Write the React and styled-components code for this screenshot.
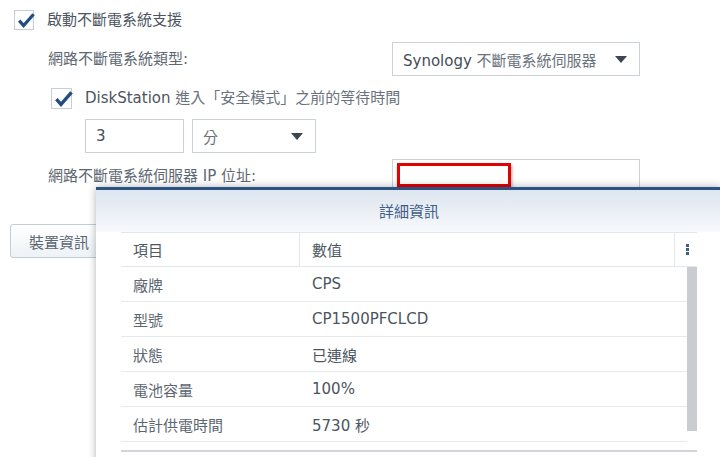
import React from "react";
import styled, { createGlobalStyle } from "styled-components";

const FONT = `"DejaVu Sans", "Noto Sans CJK TC", sans-serif`;

const Global = createGlobalStyle`
  html, body { margin: 0; padding: 0; background: #fff; }
  body {
    width: 720px; height: 457px; overflow: hidden;
    font-family: ${FONT};
    font-size: 15px; color: #4b5561;
  }
  * { box-sizing: border-box; }
`;

const Page = styled.div`
  position: relative;
  width: 720px;
  height: 457px;
  overflow: hidden;
  padding-top: 10px;
`;

const Row = styled.div`
  display: flex;
  align-items: center;
  margin-left: ${(p) => p.$indent || 0}px;
  margin-top: ${(p) => p.$top || 0}px;
  gap: ${(p) => p.$gap || 0}px;
  height: ${(p) => p.$h || 34}px;
`;

const FieldRow = styled.div`
  display: grid;
  grid-template-columns: 344px 248px;
  align-items: center;
  margin-left: 48px;
  margin-top: ${(p) => p.$top || 0}px;
  height: 34px;
`;

const Label = styled.span`
  font-size: 15px;
  color: ${(p) => (p.$dim ? "#5d6772" : "#4b5561")};
  white-space: nowrap;
  line-height: 1;
`;

const Box = styled.span`
  width: ${(p) => p.$s}px;
  height: ${(p) => p.$s}px;
  border: 1px solid #c6ced7;
  background: #fff;
  position: relative;
  flex: none;
  svg { position: absolute; left: 1px; top: 0px; overflow: visible; }
`;

const Checkbox = ({ size = 20 }) => (
  <Box $s={size}>
    <svg width={size} height={size} viewBox="0 0 20 20">
      <path d="M3.2 9.6 L7.6 14.6 L17.6 3.2" fill="none" stroke="#1f4d84" strokeWidth="3.2" strokeLinecap="butt" strokeLinejoin="miter" />
    </svg>
  </Box>
);

const Field = styled.div`
  width: ${(p) => p.$w}px;
  height: 34px;
  border: 1px solid #cbd2da;
  background: #fff;
  display: flex;
  align-items: center;
  justify-content: space-between;
  padding: 0 12px 0 10px;
  font-size: 15px;
  color: #434d58;
  white-space: nowrap;
`;

const Arrow = styled.span`
  width: 0; height: 0;
  border-left: 6px solid transparent;
  border-right: 6px solid transparent;
  border-top: 7px solid #3c4550;
`;

const Light = styled.span`
  color: #6a737d;
`;

const Button = styled.button`
  margin-left: 10px;
  margin-top: 31px;
  width: 110px;
  height: 34px;
  border: 1px solid #c4ccd6;
  border-radius: 3px;
  background: linear-gradient(#ffffff, #eef2f6);
  font-family: ${FONT};
  font-size: 15px;
  color: #5d6772;
  text-align: left;
  padding: 0 0 0 18px;
`;

const RedMark = styled.div`
  position: absolute;
  left: 397px;
  top: 163px;
  width: 114px;
  height: 24px;
  border: 3px solid #e30000;
  box-shadow: 1px 2px 3px rgba(0, 0, 0, 0.35);
`;

const Dialog = styled.div`
  position: absolute;
  left: 96px;
  top: 187px;
  width: 626px;
  height: 290px;
  background: #fff;
  border-top: 3px solid #2c5384;
  box-shadow: 0 0 8px rgba(0, 0, 0, 0.3);
`;

const DialogHeader = styled.div`
  height: 42px;
  display: flex;
  align-items: center;
  justify-content: center;
  background: linear-gradient(#dde5ef, #f7f9fc);
  font-size: 15px;
  color: #3f5f86;
  padding-bottom: 2px;
`;

const DialogBody = styled.div`
  padding: 0 25px;
`;

const HeadRow = styled.div`
  display: grid;
  grid-template-columns: 179px 375px 21px;
  height: 35px;
  border-top: 1px solid #e2e7ed;
  border-bottom: 1px solid #e2e7ed;
  align-items: stretch;
`;

const HeadCell = styled.div`
  display: flex;
  align-items: center;
  justify-content: ${(p) => (p.$center ? "center" : "flex-start")};
  padding-left: ${(p) => (p.$center ? 0 : 12)}px;
  border-right: ${(p) => (p.$last ? "none" : "1px solid #e2e7ed")};
  font-size: 15px;
  color: #4e5864;
`;

const Dots = styled.span`
  display: flex;
  flex-direction: column;
  gap: 1.5px;
  margin-left: 4px;
  i { width: 3px; height: 2.5px; background: #3e5e84; display: block; }
`;

const BodyArea = styled.div`
  display: flex;
  height: 185px;
  border-bottom: 2px solid #d2d6db;
`;

const Rows = styled.div`
  flex: 1;
`;

const DataRow = styled.div`
  display: grid;
  grid-template-columns: 179px 1fr;
  height: 35px;
  border-bottom: 1px solid #e6eaef;
  align-items: center;
`;

const Cell = styled.div`
  padding-left: 12px;
  font-size: 15px;
  color: ${(p) => (p.$key ? "#5d6772" : "#4b5561")};
  white-space: nowrap;
`;

const Scrollbar = styled.div`
  width: 10px;
  height: 164px;
  background: #c9ccd0;
  flex: none;
`;

const data = [
  ["廠牌", "CPS"],
  ["型號", "CP1500PFCLCD"],
  ["狀態", "已連線"],
  ["電池容量", "100%"],
  ["估計供電時間", "5730 秒"],
];

export default function App() {
  return (
    <>
      <Global />
      <Page>
        <Row $indent={14} $gap={13} $h={20}>
          <Checkbox size={20} />
          <Label>啟動不斷電系統支援</Label>
        </Row>
        <FieldRow $top={12}>
          <Label $dim>網路不斷電系統類型:</Label>
          <Field $w={248}>
            <span>
              Synology <Light>不斷電系統伺服器</Light>
            </span>
            <Arrow />
          </Field>
        </FieldRow>
        <Row $indent={51} $gap={13} $top={12} $h={21}>
          <Checkbox size={21} />
          <Label>
            DiskStation <Light>進入「安全模式」之前的等待時間</Light>
          </Label>
        </Row>
        <Row $indent={85} $gap={8} $top={10}>
          <Field $w={99}>3</Field>
          <Field $w={124}>
            <Light>分</Light>
            <Arrow />
          </Field>
        </Row>
        <FieldRow $top={6}>
          <Label $dim>網路不斷電系統伺服器 IP 位址:</Label>
          <Field $w={248} />
        </FieldRow>
        <Button>裝置資訊</Button>
        <RedMark />
        <Dialog>
          <DialogHeader>詳細資訊</DialogHeader>
          <DialogBody>
            <HeadRow>
              <HeadCell>項目</HeadCell>
              <HeadCell>數值</HeadCell>
              <HeadCell $center $last>
                <Dots>
                  <i />
                  <i />
                  <i />
                </Dots>
              </HeadCell>
            </HeadRow>
            <BodyArea>
              <Rows>
                {data.map(([k, v]) => (
                  <DataRow key={k}>
                    <Cell $key>{k}</Cell>
                    <Cell>{v}</Cell>
                  </DataRow>
                ))}
              </Rows>
              <Scrollbar />
            </BodyArea>
          </DialogBody>
        </Dialog>
      </Page>
    </>
  );
}
